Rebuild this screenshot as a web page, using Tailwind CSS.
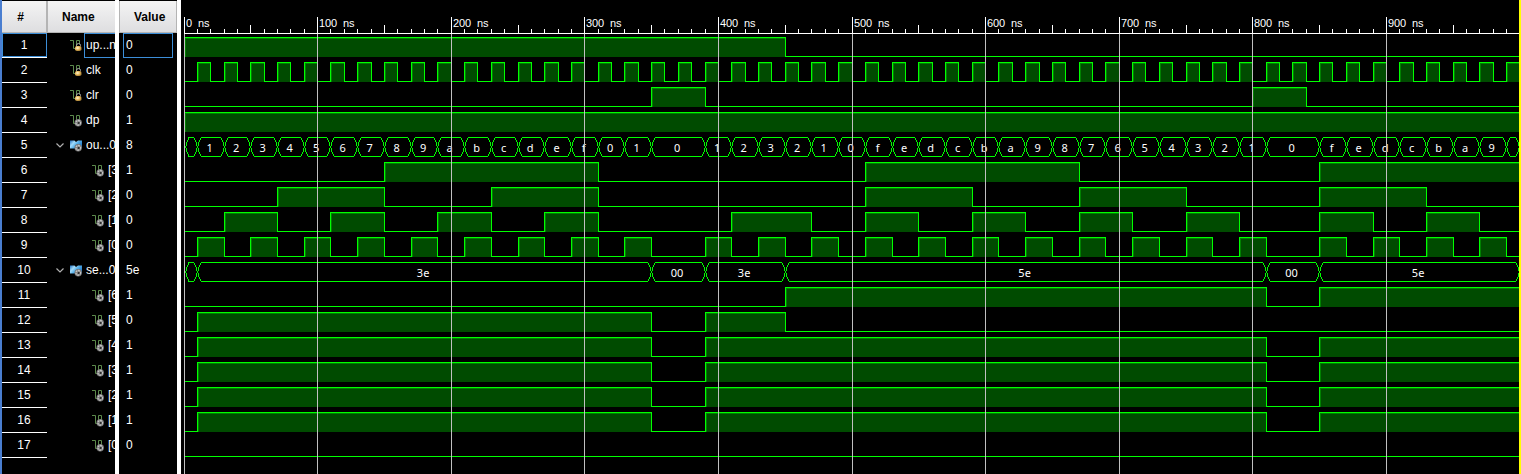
<!DOCTYPE html>
<html lang="en">
<head>
<meta charset="utf-8">
<title>Waveform</title>
<script src="https://cdn.jsdelivr.net/npm/@tailwindcss/browser@4"></script>
</head>
<body class="bg-black overflow-hidden">
<svg class="absolute size-0">
  <defs>
    <radialGradient id="gold" cx=".4" cy=".4" r=".7"><stop offset="0" stop-color="#fff6d8"/><stop offset=".55" stop-color="#e0b050"/><stop offset="1" stop-color="#8a6a30"/></radialGradient>
    <linearGradient id="blue" x1="0" y1="0" x2="1" y2=".6"><stop offset="0" stop-color="#1f6fc0"/><stop offset=".35" stop-color="#a4dcfa"/><stop offset=".6" stop-color="#58b0e8"/><stop offset="1" stop-color="#1f78c8"/></linearGradient>
    <symbol id="wave" viewBox="0 0 12 12"><path d="M0 .5H3.500V8.500H6.500V.5H9.500V5" fill="none" stroke="#5c8a4c"/></symbol>
    <symbol id="lock" viewBox="0 0 12 12"><path d="M0 .5H3.500V8.500H6.500V.5H9.500V4" fill="none" stroke="#5c8a4c"/><path d="M6.500 6.500V5.500a2 2 0 0 1 4 0v1" fill="none" stroke="#a8a8a8"/><rect x="5" y="6" width="6.500" height="5" rx="1.800" fill="url(#gold)"/></symbol>
    <symbol id="gear" viewBox="0 0 12 12"><circle cx="8.200" cy="7.800" r="3.700" fill="#777"/><circle cx="8.200" cy="7.800" r="2.300" fill="none" stroke="#c4c4c4" stroke-width="1.300" stroke-dasharray="1.800 .6"/><circle cx="8.800" cy="8" r=".9" fill="#222"/></symbol>
    <symbol id="pin" viewBox="0 0 12 12"><use href="#wave"/><use href="#gear"/></symbol>
    <symbol id="bus" viewBox="0 0 12 12"><path d="M0 .5H4.500L6 2L8 .5H12V8.500H8L6 7L4.500 8.500H0Z" fill="url(#blue)"/><use href="#gear"/></symbol>
  </defs>
</svg>
<main class="flex h-[474px] w-[1521px] bg-black text-xs text-white" style="font-family:'Liberation Sans',Arial,sans-serif">
  <div class="w-[2px] shrink-0 bg-[#4a7ed0]"></div>
  <section class="w-[45px] shrink-0">
    <div class="mt-px flex h-8 items-center justify-center border-r border-b border-[#b4b4b4] bg-linear-to-b from-[#f4f4f4] to-[#dedee0] pr-[7px] font-bold text-black">#</div>
    <div id="numbers"></div>
  </section>
  <section class="w-[68px] shrink-0 overflow-hidden">
    <div class="mt-px flex h-8 items-center border-b border-l border-[#b4b4b4] bg-linear-to-b from-[#f4f4f4] to-[#dedee0] pl-[14px] font-bold text-black">Name</div>
    <div id="names"></div>
  </section>
  <div class="w-1 shrink-0 bg-white"></div>
  <section class="w-[58px] shrink-0">
    <div class="mt-px flex h-8 items-center border border-t-0 border-[#b4b4b4] bg-linear-to-b from-[#f4f4f4] to-[#dedee0] pl-[14px] font-bold text-black">Value</div>
    <div id="values"></div>
  </section>
  <div class="w-1 shrink-0 bg-white"></div>
  <svg id="scope" class="block h-[474px] w-[1338px] shrink-0" viewBox="181 0 1338 474"></svg>
  <div class="w-[2px] shrink-0 bg-[#ffff00]"></div>
</main>
<script>
const END = 1519;
const X = t => Math.min(END, Math.floor(184 + t * 1.33603));
const rows = [
  ['up...n', '0', 'lock'], ['clk', '0', 'lock'], ['clr', '0', 'lock'], ['dp', '1', 'pin'],
  ['ou...0', '8', 'bus'], ['[3]', '1', 'bit'], ['[2]', '0', 'bit'], ['[1]', '0', 'bit'], ['[0]', '0', 'bit'],
  ['se...0', '5e', 'bus'], ['[6]', '1', 'bit'], ['[5]', '0', 'bit'], ['[4]', '1', 'bit'], ['[3]', '1', 'bit'],
  ['[2]', '1', 'bit'], ['[1]', '1', 'bit'], ['[0]', '0', 'bit']
];
let numbers = '', names = '', values = '';
rows.forEach(([name, value, kind], i) => {
  const first = i === 0;
  numbers += `<div class="h-[25px] border-b border-white"><div class="flex h-6 items-center justify-center pr-px ${first ? 'border border-[#3c8ed8]' : ''}">${i + 1}</div></div>`;
  const chevron = kind === 'bus' ? '<svg class="mr-[6px] block h-[5px] w-2 shrink-0" viewBox="0 0 8 5"><path d="M.5 .5L4 4L7.500 .5" fill="none" stroke="#b0b0b0" stroke-width="1.200"/></svg>' : '';
  const pad = kind === 'bus' ? 'pl-[9px]' : kind === 'bit' ? 'pl-[45px]' : 'pl-[23px]';
  const label = first ? 'ml-[2px] h-[25px] border border-r-0 border-[#3c8ed8] pl-px' : 'ml-[4px] h-[25px]';
  names += `<div class="flex h-[25px] w-[100px] items-center ${pad}">${chevron}<svg class="block h-3 w-3 shrink-0"><use href="#${kind === 'bit' ? 'pin' : kind}"/></svg><div class="flex w-10 items-center whitespace-nowrap ${label}"><span class="pb-[2px]">${name}</span></div></div>`;
  values += `<div class="ml-1 flex h-[25px] w-[50px] items-center ${first ? 'border border-[#3c8ed8] pl-[2px]' : 'pl-[3px]'}"><span class="pb-[2px]">${value}</span></div>`;
});
document.getElementById('numbers').innerHTML = numbers;
document.getElementById('names').innerHTML = names;
document.getElementById('values').innerHTML = values;

let out = '';
const rect = (x, y, w, h, c) => { if (w > 0 && h > 0) out += `<rect x="${x}" y="${y}" width="${w}" height="${h}" fill="${c}"/>`; };
const text = (x, y, s, attrs) => { out += `<text x="${x}" y="${y}" ${attrs}>${s}</text>`; };

function digital(row, spans) {
  const top = 37 + row * 25, low = top + 19;
  let at = 185;
  for (const [a, b] of spans) {
    const l = Math.max(185, X(a)), r = X(b);
    rect(at, low, l - at, 1, '#00ff00');
    rect(l, top, r - l, 20, '#004b00');
    rect(l, top + 1, r - l, 1, '#008000');
    rect(a > 0 ? l + 1 : l, top + 1, 1, 19, '#008000');
    rect(l, top, r - l, 1, '#00ff00');
    if (a > 0) rect(l, top, 1, 20, '#00ff00');
    if (r < END) rect(r, top, 1, 20, '#00ff00');
    at = r;
  }
  rect(at, low, END - at, 1, '#00ff00');
}
function bus(row, segs) {
  const top = 37 + row * 25;
  segs.forEach(([a, b, v]) => {
    const l = X(a) + (a === 0 ? 1 : 0), r = X(b);
    const inset = a === 0 ? 3 : 4;
    rect(l + inset, top, r - 3 - l - inset, 1, '#00ff00');
    rect(l + inset, top + 19, r - 3 - l - inset, 1, '#00ff00');
    const steps = [[1, 2, 3], [3, 2, 2], [5, 2, 1], [7, 2, 1], [9, 1, 0]];
    steps.forEach(([y, h, d]) => [[l + d, y], [r - d, y], [l + d, 20 - y - h], [r - d, 20 - y - h]]
      .forEach(([px, py]) => { if (px < END) rect(px, top + py, 1, h, '#00ff00'); }));
    if (v) text((l + r) / 2 - .9, top + 15, v, 'text-anchor="middle" font-family="Noto Sans" font-size="11" fill="#fff"');
  });
}

const seq = [[0, 10, '']];
let t = 10;
for (const c of '123456789abcdef01') { seq.push([t, t + 20, c]); t += 20; }
seq.push([350, 390, '0']); t = 390;
for (const c of '123210fedcba987654321') { seq.push([t, t + 20, c]); t += 20; }
seq.push([810, 850, '0']); t = 850;
for (const c of 'fedcba9') { seq.push([t, t + 20, c]); t += 20; }
seq.push([990, 1010, '']);

digital(0, [[0, 450]]);
digital(1, Array.from({ length: 50 }, (_, i) => [10 + i * 20, i === 49 ? 1010 : 20 + i * 20]));
digital(2, [[350, 390], [800, 840]]);
digital(3, [[0, 1010]]);
bus(4, seq);
[3, 2, 1, 0].forEach((bit, i) => {
  const spans = [];
  for (const [a, b, v] of seq) {
    const n = v === '' ? (a === 990 ? 8 : 0) : parseInt(v, 16);
    if (n >> bit & 1) {
      const last = spans[spans.length - 1];
      if (last && last[1] === a) last[1] = b; else spans.push([a, b]);
    }
  }
  digital(5 + i, spans);
});
bus(9, [[0, 10, ''], [10, 350, '3e'], [350, 390, '00'], [390, 450, '3e'], [450, 810, '5e'], [810, 850, '00'], [850, 1010, '5e']]);
digital(10, [[450, 810], [850, 1010]]);
digital(11, [[10, 350], [390, 450]]);
for (let r = 12; r < 16; r++) digital(r, [[10, 350], [390, 810], [850, 1010]]);
digital(16, []);

rect(184, 33, END - 184, 1, '#fff');
for (let n = 0; n < 1000; n += 10) {
  const x = X(n);
  if (n % 100 === 0) {
    rect(x, 17, 1, 17, '#fff');
    rect(x, 34, 1, 440, '#c0c0c0');
    const s = n + ' ns';
    text([...s].map((_, k) => x + 2 + k * 6).join(' '), 27, s, 'font-family="Liberation Sans" font-size="11" fill="#fff"');
  } else {
    const h = n % 50 === 0 ? 9 : 5;
    rect(x, 34 - h, 1, h, '#fff');
  }
}
document.getElementById('scope').innerHTML = out;
</script>
</body>
</html>
